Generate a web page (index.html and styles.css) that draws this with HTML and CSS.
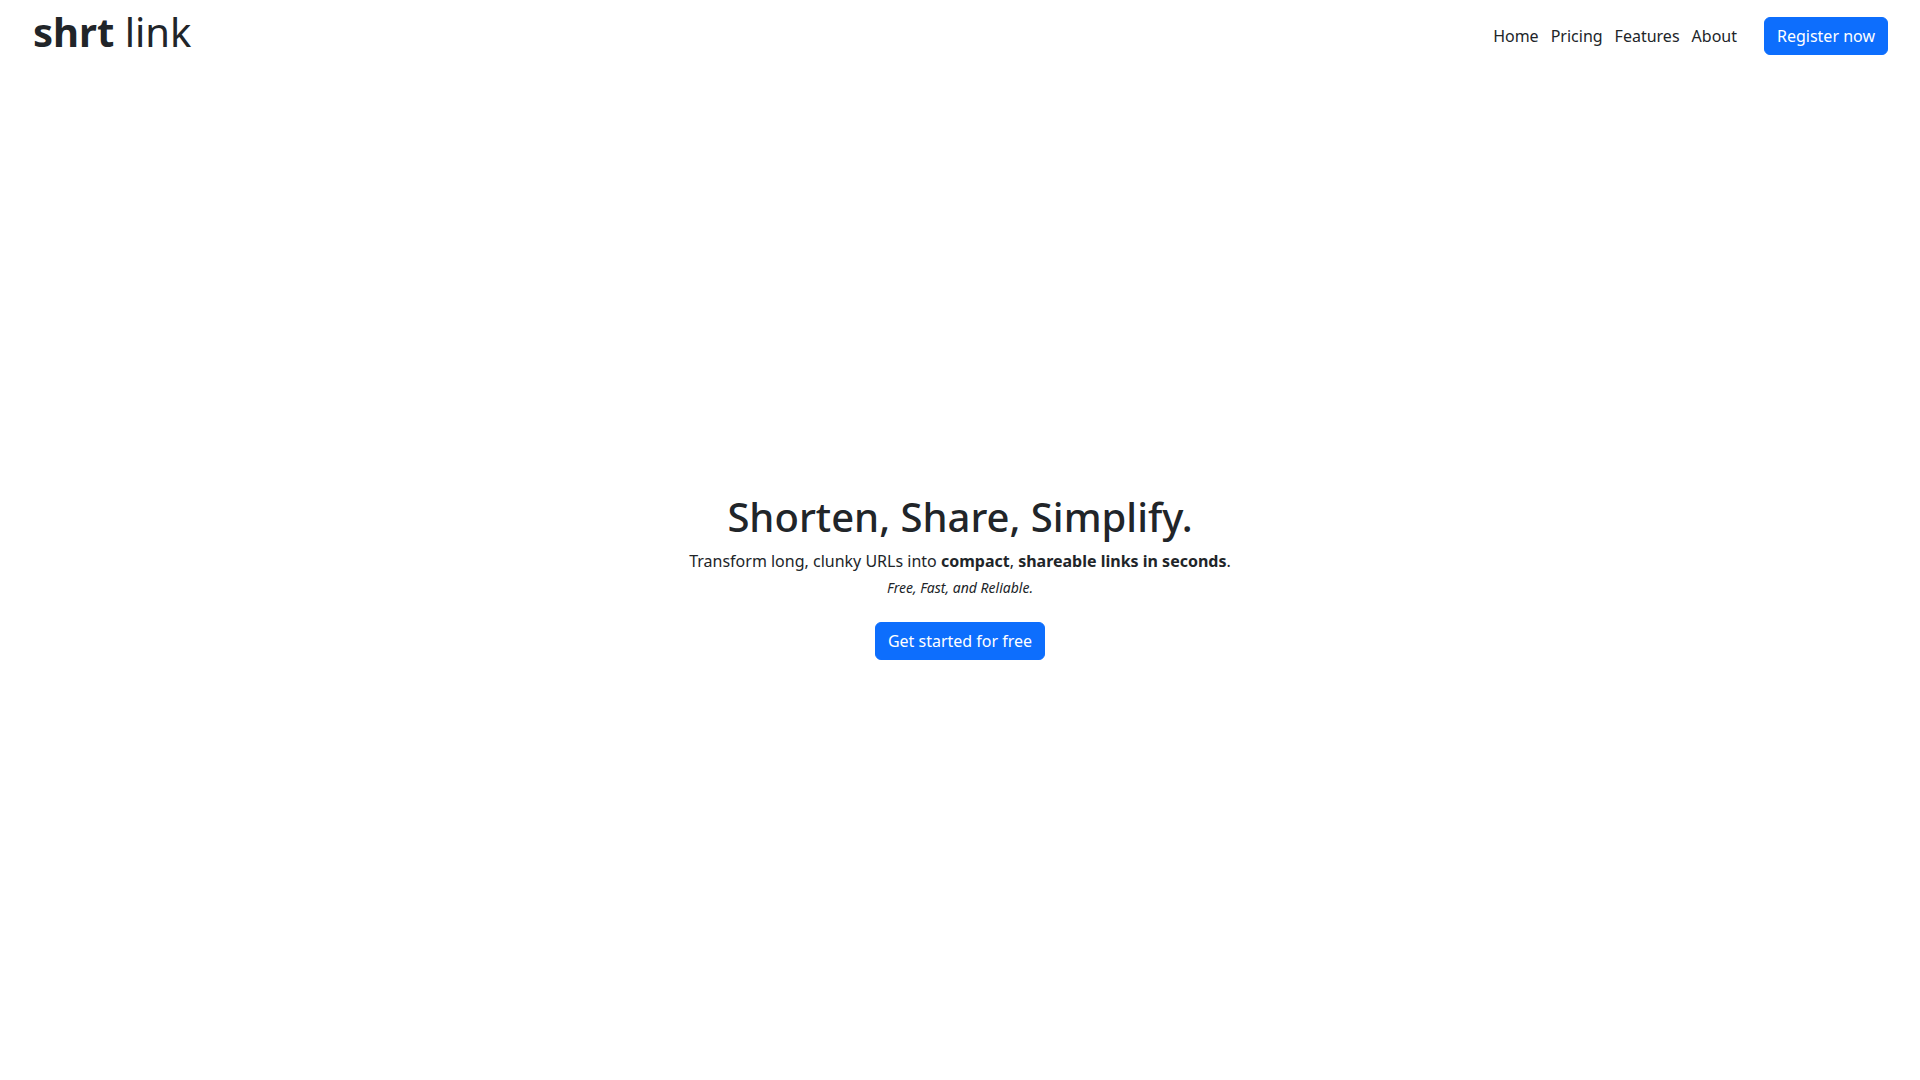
FILE: index.html
```html
<!DOCTYPE html>
<html lang="en">
<head>
<meta charset="utf-8">
<title>shrt link</title>
<link rel="stylesheet" href="styles.css">
</head>
<body>
<header class="navbar">
  <a class="brand" href="#"><strong>shrt</strong> link</a>
  <nav class="nav">
    <a class="nav-link" href="#">Home</a>
    <a class="nav-link" href="#">Pricing</a>
    <a class="nav-link" href="#">Features</a>
    <a class="nav-link" href="#">About</a>
    <a class="btn" href="#">Register now</a>
  </nav>
</header>
<main class="hero">
  <h1 class="hero-title">Shorten, Share, Simplify.</h1>
  <p class="hero-lead">Transform long, clunky URLs into <strong>compact</strong>, <strong>shareable links in seconds</strong>.</p>
  <p class="hero-tag"><em>Free, Fast, and Reliable.</em></p>
  <a class="btn" href="#">Get started for free</a>
</main>
</body>
</html>
```

FILE: styles.css
```css
* { box-sizing: border-box; }
html, body { margin: 0; height: 100%; }
body {
  font-family: "Noto Sans", "Liberation Sans", sans-serif;
  font-size: 16px;
  line-height: 1.5;
  color: #212529;
  background: #fff;
  display: flex;
  flex-direction: column;
}
a { text-decoration: none; color: inherit; }
.navbar {
  display: flex;
  align-items: center;
  justify-content: space-between;
  padding: 0 32px 0 33px;
  height: 72px;
}
.brand {
  font-size: 40px;
  line-height: 1;
  margin-top: -8px;
  color: #212529;
}
.brand strong { font-weight: 700; }
.nav {
  display: flex;
  align-items: center;
  gap: 12px;
}
.nav-link { color: #212529; }
.nav .btn { margin-left: 15px; }
.btn {
  display: inline-block;
  background: #0d6efd;
  border: 1px solid #0d6efd;
  color: #fff;
  border-radius: 6px;
  padding: 6px 12px;
  line-height: 24px;
  font-size: 16px;
}
.hero {
  flex: 1;
  display: flex;
  flex-direction: column;
  align-items: center;
  justify-content: center;
  text-align: center;
}
.hero-title {
  font-size: 40px;
  font-weight: 500;
  line-height: 1.2;
  margin: 0 0 8px;
}
.hero-lead { margin: 0 0 4px; }
.hero-tag { margin: 0 0 24px; font-size: 14px; }
```
